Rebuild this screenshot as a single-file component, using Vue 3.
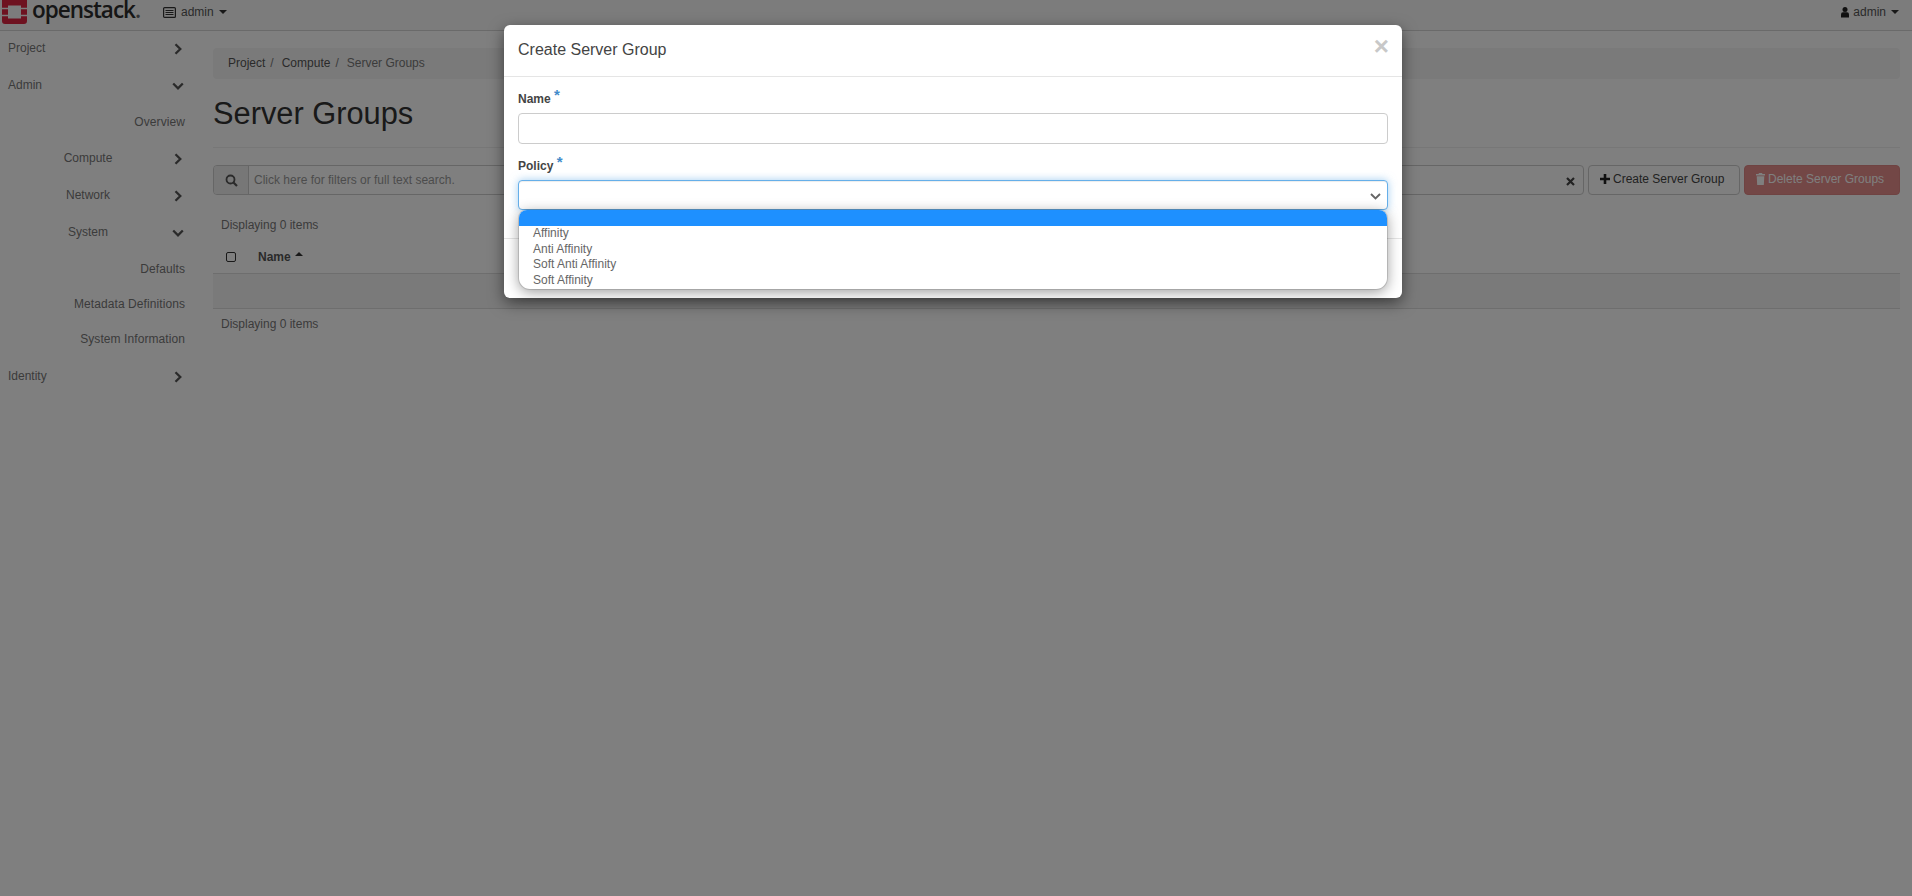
<script setup>
const sidebar = [
  { label: 'Project', kind: 'top', icon: 'right' },
  { label: 'Admin', kind: 'top', icon: 'down' },
  { label: 'Overview', kind: 'leaf' },
  { label: 'Compute', kind: 'mid', icon: 'right' },
  { label: 'Network', kind: 'mid', icon: 'right' },
  { label: 'System', kind: 'mid', icon: 'down' },
  { label: 'Defaults', kind: 'leaf' },
  { label: 'Metadata Definitions', kind: 'leaf' },
  { label: 'System Information', kind: 'leaf' },
  { label: 'Identity', kind: 'top', icon: 'right' }
]
const options = ['Affinity', 'Anti Affinity', 'Soft Anti Affinity', 'Soft Affinity']
</script>

<template>
  <div class="page">
    <header class="topbar">
      <div class="brand">
        <svg class="logo" viewBox="0 0 25 24" width="25" height="24">
          <path fill="#dc2440" fill-rule="evenodd" d="M0 0H25V21Q25 24 22 24H3Q0 24 0 21ZM6 5.500V18.500H19V5.500Z" />
          <path fill="#f8f8f8" d="M0 7.800H6V9.300H0ZM19 7.800H25V9.300H19ZM0 14.700H6V16.200H0ZM19 14.700H25V16.200H19Z" />
        </svg>
        <span class="wordmark">openstack<span class="dot">.</span></span>
      </div>
      <div class="project-menu">
        <svg width="13" height="11" viewBox="0 0 13 11"><rect x=".6" y=".6" width="11.800" height="9.800" rx="1" fill="none" stroke="#333" stroke-width="1.200"/><path d="M2.500 3.500h8M2.500 5.500h8M2.500 7.500h8" stroke="#333"/></svg>
        <span>admin</span><i class="caret"></i>
      </div>
      <div class="user-menu">
        <svg width="8" height="11" viewBox="0 0 8 11"><circle cx="4" cy="2.600" r="2.500" fill="#222"/><path d="M0 10.500V7.500Q0 5.300 2 5.300H6Q8 5.300 8 7.500V10.500Z" fill="#222"/></svg>
        <span>admin</span><i class="caret"></i>
      </div>
    </header>

    <div class="body">
      <nav class="sidebar">
        <div v-for="item in sidebar" :key="item.label" class="side-row" :class="item.kind">
          <span class="side-label">{{ item.label }}</span>
          <svg v-if="item.icon === 'right'" class="chev" width="12" height="12" viewBox="0 0 12 12"><path d="M3.500 1.200 8.300 6 3.500 10.800" fill="none" stroke="#555" stroke-width="2.300"/></svg>
          <svg v-if="item.icon === 'down'" class="chev" width="12" height="12" viewBox="0 0 12 12"><path d="M1.200 3.500 6 8.300 10.800 3.500" fill="none" stroke="#555" stroke-width="2.300"/></svg>
        </div>
      </nav>

      <main class="content">
        <div class="breadcrumb">
          <span class="crumb">Project</span><span class="sep">/</span>
          <span class="crumb">Compute</span><span class="sep">/</span>
          <span class="crumb active">Server Groups</span>
        </div>
        <h1 class="title">Server Groups</h1>
        <div class="toolbar">
          <div class="search">
            <div class="addon">
              <svg width="13" height="13" viewBox="0 0 13 13"><circle cx="5.500" cy="5.500" r="4" fill="none" stroke="#555" stroke-width="1.800"/><path d="M8.500 8.500 12 12" stroke="#555" stroke-width="2.200"/></svg>
            </div>
            <div class="search-text">Click here for filters or full text search.</div>
            <svg class="clear" width="9" height="9" viewBox="0 0 9 9"><path d="M1 1 8 8M8 1 1 8" stroke="#444" stroke-width="2.200"/></svg>
          </div>
          <button class="btn create">
            <svg width="10" height="10" viewBox="0 0 10 10"><path d="M5 0V10M0 5H10" stroke="#222" stroke-width="2.600"/></svg>
            <span>Create Server Group</span>
          </button>
          <button class="btn danger">
            <svg width="9" height="12" viewBox="0 0 9 12"><path fill="#fff" d="M3 0H6L6.500 1H9V2.500H0V1H2.500ZM.7 3.200H8.300L7.800 12H1.200Z"/></svg>
            <span>Delete Server Groups</span>
          </button>
        </div>
        <div class="count">Displaying 0 items</div>
        <div class="thead">
          <i class="check"></i>
          <span class="th-name">Name</span>
          <i class="sort"></i>
        </div>
        <div class="empty-row"></div>
        <div class="count bottom">Displaying 0 items</div>
      </main>
    </div>

    <div class="backdrop"></div>

    <section class="modal">
      <div class="modal-head">
        <h2>Create Server Group</h2>
        <span class="close">×</span>
      </div>
      <div class="modal-body">
        <label class="field-label">Name <sup>*</sup></label>
        <input class="control" type="text" />
        <label class="field-label policy">Policy <sup>*</sup></label>
        <div class="select">
          <svg width="11" height="7" viewBox="0 0 11 7"><path d="M1 1 5.500 5.500 10 1" fill="none" stroke="#666" stroke-width="1.900"/></svg>
          <div class="listbox">
            <div class="opt selected"></div>
            <div v-for="o in options" :key="o" class="opt">{{ o }}</div>
          </div>
        </div>
      </div>
      <div class="modal-foot"></div>
    </section>
  </div>
</template>

<style>
html, body { margin: 0; background: #fff; }
</style>

<style scoped>
.page {
  position: relative;
  width: 1912px;
  height: 896px;
  overflow: hidden;
  background: #fff;
  font-family: "Liberation Sans", Arial, sans-serif;
  font-size: 12px;
  color: #333;
}
.topbar {
  height: 30px;
  border-bottom: 1px solid #d5d5d5;
  background: #f8f8f8;
  display: flex;
  align-items: center;
}
.brand { display: flex; width: 163px; padding-left: 2px; box-sizing: border-box; height: 30px; }
.logo { flex: none; }
.wordmark {
  font-family: "Open Sans", sans-serif;
  font-size: 22.500px;
  font-weight: 600;
  letter-spacing: -1px;
  margin-left: 5px;
  color: #2c2c2c;
  line-height: 20px;
  height: 22px;
}
.dot { color: #666; }
.project-menu, .user-menu { display: flex; align-items: center; color: #555; }
.project-menu { margin-top: -6px; }
.project-menu span { margin-left: 5px; }
.user-menu { margin-left: auto; margin-right: 13px; margin-top: -6px; }
.user-menu span { margin-left: 4px; }
.caret {
  width: 0;
  height: 0;
  margin-left: 5px;
  border-top: 4px solid #333;
  border-left: 4px solid transparent;
  border-right: 4px solid transparent;
}
.body { display: flex; }
.sidebar { width: 213px; flex: none; margin-top: -2px; }
.side-row {
  height: 37px;
  width: 185px;
  display: flex;
  align-items: center;
  position: relative;
  color: #777;
}
.side-row.top .side-label { padding-left: 8px; }
.side-row.mid .side-label { width: 176px; text-align: center; }
.side-row.leaf { justify-content: flex-end; height: 35px; letter-spacing: .08px; }
.side-row:nth-child(2) { margin-bottom: 1px; }
.side-row:nth-child(7) { margin-top: 1px; }
.side-row:nth-child(9) { margin-bottom: 1px; }
.chev { position: absolute; left: 172px; top: 14px; }
.content { width: 1687px; padding-top: 17px; }
.breadcrumb {
  height: 31px;
  box-sizing: border-box;
  padding: 0 0 2px 15px;
  background: #f5f5f5;
  border-radius: 4px;
  display: flex;
  align-items: center;
  color: #555;
}
.crumb.active { color: #777; }
.sep { color: #777; margin: 0 8px 0 5px; }
.title {
  margin: 17px 0 0;
  font-size: 30.800px;
  font-weight: 400;
  line-height: 36px;
  height: 51px;
  border-bottom: 1px solid #eee;
  color: #333;
}
.toolbar { display: flex; gap: 4px; margin-top: 17px; height: 30px; }
.search {
  flex: none;
  width: 1371px;
  box-sizing: border-box;
  border: 1px solid #ccc;
  border-radius: 4px;
  display: flex;
  align-items: center;
  position: relative;
}
.addon {
  width: 34px;
  height: 100%;
  background: #eee;
  border-right: 1px solid #ccc;
  border-radius: 3px 0 0 3px;
  display: flex;
  align-items: center;
  justify-content: center;
  flex: none;
}
.search-text { margin-left: 5px; color: #999; }
.clear { position: absolute; right: 8px; top: 11px; }
.btn {
  box-sizing: border-box;
  height: 30px;
  background: #fff;
  border: 1px solid #ccc;
  border-radius: 4px;
  font: 12px "Liberation Sans", Arial, sans-serif;
  color: #444;
  padding: 0 0 2px 11px;
  display: flex;
  align-items: center;
  gap: 3px;
  white-space: nowrap;
}
.btn.create { width: 152px; padding-left: 11px; }
.btn.danger {
  width: 156px;
  background: #e68e8c;
  border-color: #de8684;
  color: #fff;
}
.count { color: #777; margin: 22px 0 0 8px; line-height: 16px; }
.count.bottom { margin-top: 7px; }
.thead {
  display: flex;
  align-items: center;
  height: 34px;
  margin-top: 7px;
  box-sizing: border-box;
  border-bottom: 1px solid #ddd;
  padding-left: 13px;
}
.check {
  width: 8px;
  height: 8px;
  border: 1px solid #333;
  border-radius: 2px;
  background: #fff;
}
.th-name { margin-left: 22px; font-weight: 700; color: #555; }
.sort {
  margin: 0 0 5px 4px;
  border-bottom: 4px solid #333;
  border-left: 4px solid transparent;
  border-right: 4px solid transparent;
}
.empty-row {
  height: 34px;
  background: #f5f5f5;
  border-bottom: 1px solid #ddd;
}
.backdrop {
  position: absolute;
  inset: 0;
  background: rgba(0, 0, 0, .5);
}
.modal {
  position: absolute;
  left: 504px;
  top: 25px;
  width: 898px;
  height: 273px;
  background: #fff;
  border-radius: 6px;
  box-shadow: 0 5px 15px rgba(0, 0, 0, .5);
  display: flex;
  flex-direction: column;
}
.modal-head {
  height: 51px;
  flex: none;
  border-bottom: 1px solid #e5e5e5;
  position: relative;
  display: flex;
  align-items: center;
  padding-left: 14px;
}
.modal-head h2 { margin: 0 0 2px; font-size: 16px; font-weight: 400; color: #444; }
.close {
  position: absolute;
  right: 13px;
  top: 6px;
  font-size: 26px;
  font-weight: 700;
  line-height: 30px;
  color: #c8c8c8;
}
.modal-body { flex: none; height: 161px; padding: 0 14px; box-sizing: border-box; position: relative; }
.field-label {
  display: block;
  font-weight: 700;
  font-size: 12px;
  color: #444;
  margin-top: 14px;
  height: 22px;
  line-height: 16px;
}
.field-label sup { color: #428bca; font-size: 15px; line-height: 0; margin-left: 0; vertical-align: 3px; }
.control, .select {
  display: block;
  box-sizing: border-box;
  width: 870px;
  height: 31px;
  border: 1px solid #ccc;
  border-radius: 4px;
  background: #fff;
  outline: none;
}
.select {
  height: 30px;
  border-color: #66afe9;
  box-shadow: 0 0 8px rgba(102, 175, 233, .6), inset 0 1px 1px rgba(0, 0, 0, .075);
  position: relative;
}
.select > svg { position: absolute; right: 6px; top: 12px; }
.listbox {
  position: absolute;
  left: 0;
  top: 29px;
  width: 868px;
  height: 79px;
  background: #fff;
  border-radius: 8px 8px 11px 11px;
  box-shadow: 0 0 0 1px rgba(0, 0, 0, .12), 0 3px 14px rgba(0, 0, 0, .4);
  overflow: hidden;
  z-index: 2;
}
.opt { height: 15.600px; line-height: 15.600px; padding-left: 14px; color: #666; }
.opt.selected { background: #1e90ff; height: 16px; }
.modal-foot { flex: 1; border-top: 1px solid #e5e5e5; }
</style>
